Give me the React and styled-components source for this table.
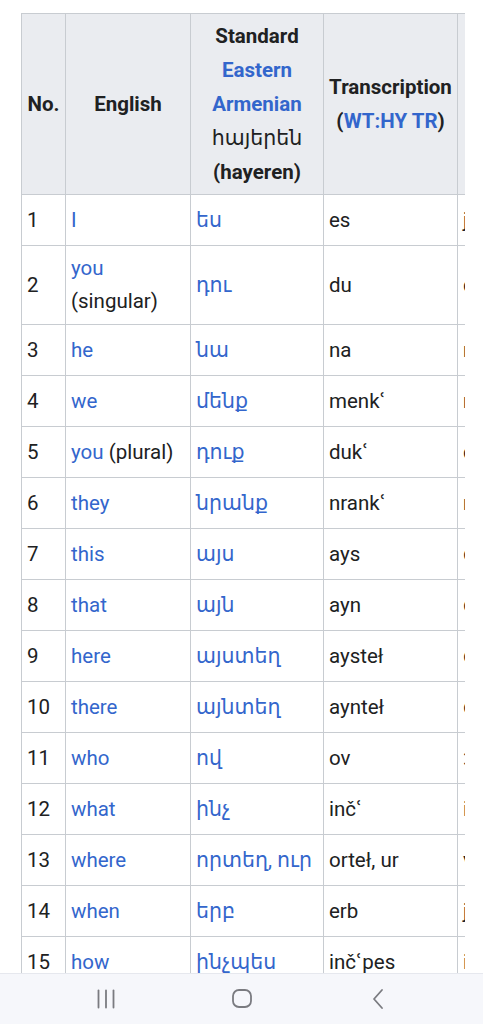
import React from "react";
import styled, { createGlobalStyle } from "styled-components";

const GlobalStyle = createGlobalStyle`
  html, body { margin: 0; padding: 0; background: #ffffff; }
  body { font-family: Roboto, "DejaVu Sans", "Noto Sans", sans-serif; color: #202122; }
`;

const Screen = styled.div`
  height: 100vh;
  display: flex;
  flex-direction: column;
  overflow: hidden;
`;

const Content = styled.main`
  flex: 1;
  min-height: 0;
  overflow: hidden;
  padding: 13px 18px 0 21px;
`;

const TableScroller = styled.div`
  width: 100%;
  overflow: hidden;
`;

const Table = styled.table`
  border-collapse: collapse;
  font-size: 20.5px;
  table-layout: fixed;
  width: 580px;
`;

const Col = styled.col`
  width: ${(p) => p.$w}px;
`;

const Th = styled.th`
  background: #eaecf0;
  border: 1px solid #c8ccd1;
  padding: 5px 4px;
  line-height: 34px;
  font-weight: 700;
  text-align: center;
  vertical-align: middle;
  white-space: nowrap;
`;

const Armenian = styled.span`
  font-weight: 400;
`;

const Td = styled.td`
  border: 1px solid #c8ccd1;
  padding: 6px 4px 6px 5px;
  height: 38px;
  line-height: 33px;
  vertical-align: middle;
  text-align: left;
  white-space: ${(p) => (p.$wrap ? "normal" : "nowrap")};
`;

const Link = styled.a`
  color: #3366cc;
  text-decoration: none;
`;

const NavBar = styled.nav`
  flex: 0 0 50px;
  background: #f6f7fb;
  border-top: 1px solid #e6e8ee;
  display: flex;
  align-items: center;
  justify-content: center;
  gap: 96px;
`;

const NavButton = styled.div`
  width: 40px;
  height: 40px;
  display: flex;
  align-items: center;
  justify-content: center;
`;

const rows = [
  ["1", ["I"], "ես", "es", "jɛs"],
  ["2", ["you", "(singular)"], "դու", "du", "du"],
  ["3", ["he"], "նա", "na", "nɑ"],
  ["4", ["we"], "մենք", "menkʿ", "mɛnkʰ"],
  ["5", ["you", " (plural)"], "դուք", "dukʿ", "dukʰ"],
  ["6", ["they"], "նրանք", "nrankʿ", "nɾɑnkʰ"],
  ["7", ["this"], "այս", "ays", "ɑjs"],
  ["8", ["that"], "այն", "ayn", "ɑjn"],
  ["9", ["here"], "այստեղ", "aysteł", "ɑjstɛʁ"],
  ["10", ["there"], "այնտեղ", "aynteł", "ɑjntɛʁ"],
  ["11", ["who"], "ով", "ov", "ɔv"],
  ["12", ["what"], "ինչ", "inčʿ", "intʃʰ"],
  ["13", ["where"], "որտեղ, ուր", "orteł, ur", "voɾtɛʁ, uɾ"],
  ["14", ["when"], "երբ", "erb", "jɛɾb"],
  ["15", ["how"], "ինչպես", "inčʿpes", "intʃʰpɛs"],
];

function English({ parts }) {
  if (parts.length === 1) return <Link>{parts[0]}</Link>;
  if (parts[1].startsWith(" ")) {
    return (
      <>
        <Link>{parts[0]}</Link>
        {parts[1]}
      </>
    );
  }
  return (
    <>
      <Link>{parts[0]}</Link>
      <br />
      {parts[1]}
    </>
  );
}

function RecentsIcon() {
  return (
    <svg width="20" height="20" viewBox="0 0 20 20">
      <g stroke="#7a7b80" strokeWidth="1.8" strokeLinecap="round">
        <line x1="2.5" y1="1.5" x2="2.5" y2="18.5" />
        <line x1="10" y1="1.5" x2="10" y2="18.5" />
        <line x1="17.5" y1="1.5" x2="17.5" y2="18.5" />
      </g>
    </svg>
  );
}

function HomeIcon() {
  return (
    <svg width="22" height="22" viewBox="0 0 22 22">
      <rect x="2" y="2" width="18" height="17" rx="6" fill="none" stroke="#7a7b80" strokeWidth="1.8" />
    </svg>
  );
}

function BackIcon() {
  return (
    <svg width="14" height="22" viewBox="0 0 14 22">
      <polyline points="11,2 3,11 11,20" fill="none" stroke="#7a7b80" strokeWidth="1.8" strokeLinecap="round" strokeLinejoin="round" />
    </svg>
  );
}

export default function App() {
  return (
    <Screen>
      <GlobalStyle />
      <Content>
        <TableScroller>
          <Table>
            <colgroup>
              <Col $w={44} />
              <Col $w={125} />
              <Col $w={133} />
              <Col $w={134} />
              <Col $w={144} />
            </colgroup>
            <thead>
              <tr>
                <Th>No.</Th>
                <Th>English</Th>
                <Th>
                  Standard
                  <br />
                  <Link>Eastern</Link>
                  <br />
                  <Link>Armenian</Link>
                  <br />
                  <Armenian>հայերեն</Armenian>
                  <br />
                  (hayeren)
                </Th>
                <Th>
                  Transcription
                  <br />(<Link>WT:HY TR</Link>)
                </Th>
                <Th>
                  IPA
                  <br />
                  Pronunciation
                </Th>
              </tr>
            </thead>
            <tbody>
              {rows.map((r) => (
                <tr key={r[0]}>
                  <Td>{r[0]}</Td>
                  <Td $wrap>
                    <English parts={r[1]} />
                  </Td>
                  <Td>
                    <Link>{r[2]}</Link>
                  </Td>
                  <Td>{r[3]}</Td>
                  <Td>{r[4]}</Td>
                </tr>
              ))}
            </tbody>
          </Table>
        </TableScroller>
      </Content>
      <NavBar>
        <NavButton>
          <RecentsIcon />
        </NavButton>
        <NavButton>
          <HomeIcon />
        </NavButton>
        <NavButton>
          <BackIcon />
        </NavButton>
      </NavBar>
    </Screen>
  );
}
